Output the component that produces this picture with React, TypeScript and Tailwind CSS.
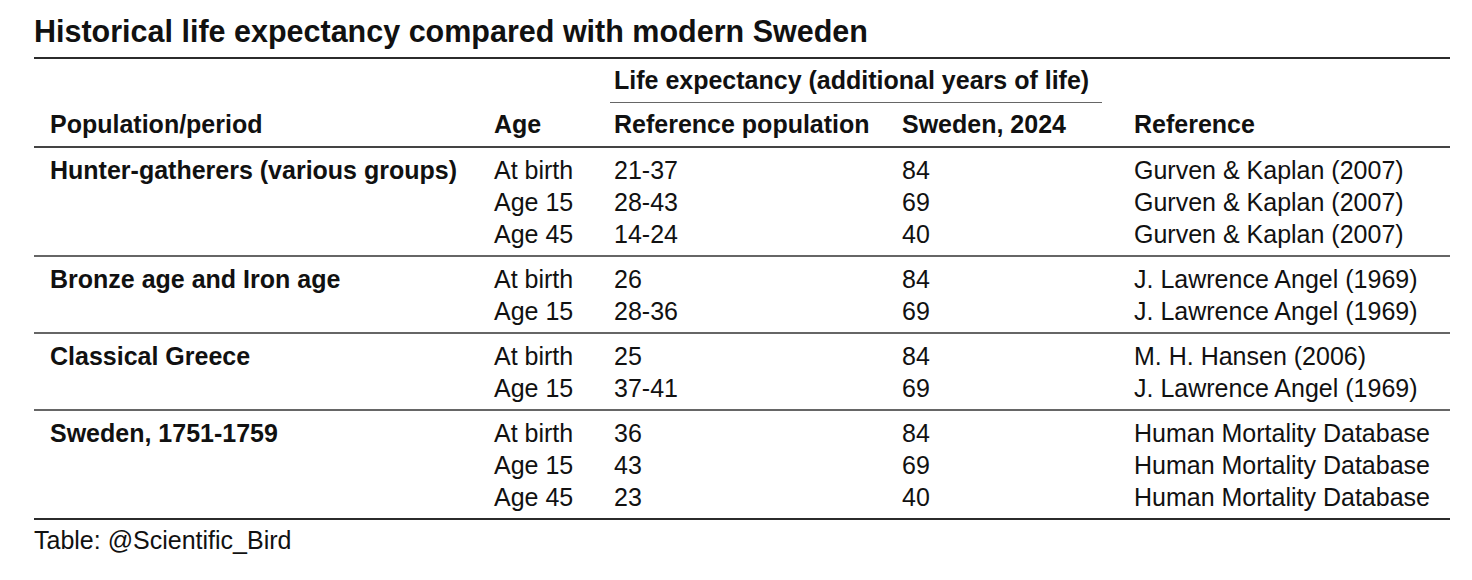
import React from 'react';

const groups = [
  {
    name: 'Hunter-gatherers (various groups)',
    rows: [
      ['At birth', '21-37', '84', 'Gurven & Kaplan (2007)'],
      ['Age 15', '28-43', '69', 'Gurven & Kaplan (2007)'],
      ['Age 45', '14-24', '40', 'Gurven & Kaplan (2007)'],
    ],
  },
  {
    name: 'Bronze age and Iron age',
    rows: [
      ['At birth', '26', '84', 'J. Lawrence Angel (1969)'],
      ['Age 15', '28-36', '69', 'J. Lawrence Angel (1969)'],
    ],
  },
  {
    name: 'Classical Greece',
    rows: [
      ['At birth', '25', '84', 'M. H. Hansen (2006)'],
      ['Age 15', '37-41', '69', 'J. Lawrence Angel (1969)'],
    ],
  },
  {
    name: 'Sweden, 1751-1759',
    rows: [
      ['At birth', '36', '84', 'Human Mortality Database'],
      ['Age 15', '43', '69', 'Human Mortality Database'],
      ['Age 45', '23', '40', 'Human Mortality Database'],
    ],
  },
];

const cols = 'grid grid-cols-[444px_120px_288px_232px_332px]';

const App = () => {
  return (
    <div
      className="w-[1472px] h-[580px] bg-white text-[#111] px-[34px] pt-[15px]"
      style={{ fontFamily: '"Liberation Sans", Arial, sans-serif' }}
    >
      <div className="text-[30.5px] leading-[32px] font-bold">
        Historical life expectancy compared with modern Sweden
      </div>

      <div className="w-[1416px] mt-[10px] border-t-2 border-[#2b2b2b]">
        {/* header */}
        <div className={`${cols} mt-[5px] text-[25px] leading-[32px] font-bold`}>
          <div />
          <div />
          <div className="col-span-2 pl-4">Life expectancy (additional years of life)</div>
          <div />
        </div>
        <div className={`${cols} mt-[6px]`}>
          <div />
          <div />
          <div className="col-span-2 ml-3 mr-4 border-t border-[#666]" />
          <div />
        </div>
        <div className={`${cols} mt-[5px] mb-[6px] text-[25px] leading-[32px] font-bold`}>
          <div className="pl-4">Population/period</div>
          <div className="pl-4">Age</div>
          <div className="pl-4">Reference population</div>
          <div className="pl-4">Sweden, 2024</div>
          <div className="pl-4">Reference</div>
        </div>

        {/* body */}
        {groups.map((g, gi) => (
          <div
            key={g.name}
            className={`pt-[6px] pb-[5px] border-t-2 ${gi === 0 ? 'border-[#444]' : 'border-[#666]'}`}
          >
            {g.rows.map((r, ri) => (
              <div key={ri} className={`${cols} text-[25px] leading-[32px]`}>
                <div className="pl-4 font-bold">{ri === 0 ? g.name : ''}</div>
                <div className="pl-4">{r[0]}</div>
                <div className="pl-4">{r[1]}</div>
                <div className="pl-4">{r[2]}</div>
                <div className="pl-4">{r[3]}</div>
              </div>
            ))}
          </div>
        ))}
        <div className="border-t-2 border-[#2b2b2b]" />
      </div>

      <div className="mt-[4px] text-[25px] leading-[32px]">Table: @Scientific_Bird</div>
    </div>
  );
};

export default App;
